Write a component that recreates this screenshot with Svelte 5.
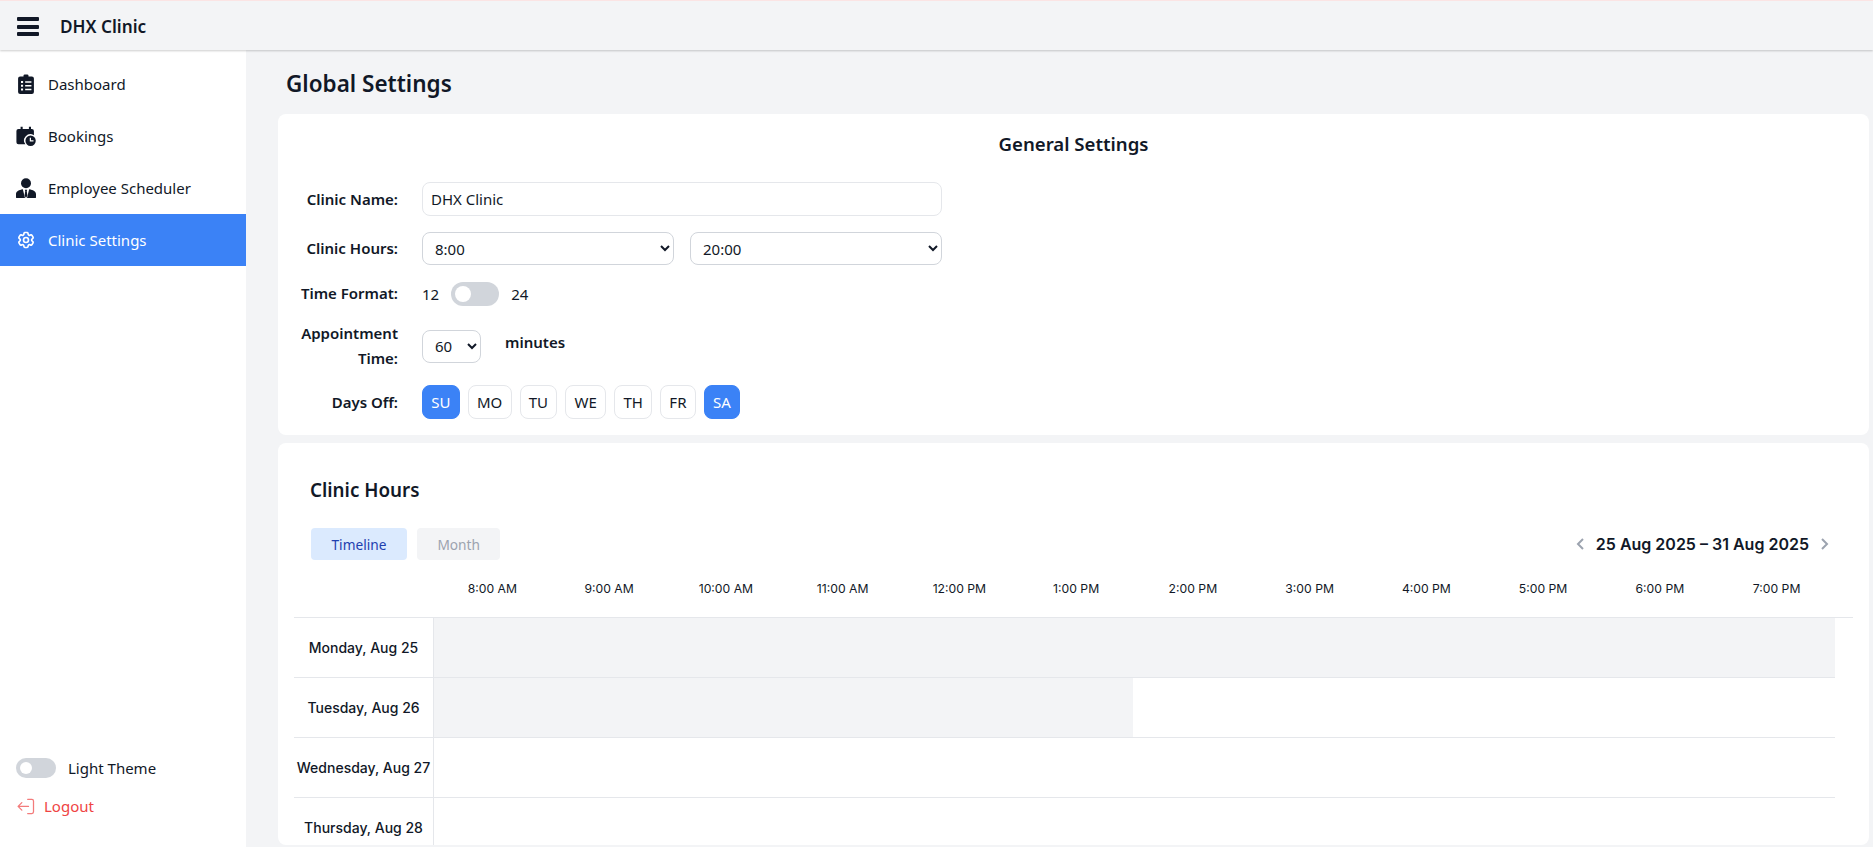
<script>
  const nav = [
    { label: 'Dashboard', icon: 'clipboard' },
    { label: 'Bookings', icon: 'calendar' },
    { label: 'Employee Scheduler', icon: 'person' },
    { label: 'Clinic Settings', icon: 'gear', active: true }
  ];
  const days = [
    { d: 'SU', off: true }, { d: 'MO' }, { d: 'TU' }, { d: 'WE' }, { d: 'TH' }, { d: 'FR' }, { d: 'SA', off: true }
  ];
  const hours = ['8:00 AM', '9:00 AM', '10:00 AM', '11:00 AM', '12:00 PM', '1:00 PM', '2:00 PM', '3:00 PM', '4:00 PM', '5:00 PM', '6:00 PM', '7:00 PM'];
  const rows = [
    { label: 'Monday, Aug 25', closed: 100 },
    { label: 'Tuesday, Aug 26', closed: 49.9 },
    { label: 'Wednesday, Aug 27', closed: 0 },
    { label: 'Thursday, Aug 28', closed: 0 }
  ];
</script>

<div class="app">
  <header class="topbar">
    <button class="burger" aria-label="Menu"><span></span><span></span><span></span></button>
    <span class="brand">DHX Clinic</span>
  </header>

  <div class="body">
    <aside class="sidebar">
      <nav>
        {#each nav as item}
          <a class="nav-item" class:active={item.active} href="#top">
            <svg viewBox="0 0 24 24" width="20" height="20" fill="currentColor">
              {#if item.icon === 'clipboard'}
                <path fill-rule="evenodd" d="M9 1.800a1.500 1.500 0 0 1 1.500-1.300h3A1.500 1.500 0 0 1 15 1.800V3h4a2.500 2.500 0 0 1 2.500 2.500v16A2.500 2.500 0 0 1 19 24H5a2.500 2.500 0 0 1-2.500-2.500v-16A2.500 2.500 0 0 1 5 3h4zM6 8.500v2.200h2.500V8.500zm5 .2v1.800h7.500V8.700zM6 13v2.200h2.500V13zm5 .2V15h7.500v-1.800zM6 17.500v2.200h2.500v-2.200zm5 .2v1.800h7.500v-1.800z"/>
              {:else if item.icon === 'calendar'}
                <path d="M5.500 0.800h2.500v2.700h7.500V.8H18v2.700h1A2.500 2.500 0 0 1 21.500 6v5.200A7.500 7.500 0 0 0 11.300 22H3A2.500 2.500 0 0 1 .5 19.500V6A2.500 2.500 0 0 1 3 3.500h2.500z"/>
                <path fill-rule="evenodd" d="M17.500 11.500a6.200 6.200 0 1 1 0 12.400 6.200 6.200 0 0 1 0-12.400zm-1 2.500v4.500H21V17h-3v-3z"/>
              {:else if item.icon === 'person'}
                <circle cx="12" cy="6.300" r="6"/>
                <path d="M8.200 13.500 10.800 24H1a1 1 0 0 1-1-1v-3.800c0-2.900 3.500-5 8.200-5.700zM15.800 13.500c4.700.7 8.200 2.800 8.200 5.700V23a1 1 0 0 1-1 1h-9.800z"/>
                <path d="M10.600 14h2.800l-.5 1.800.8 5.200-1.700 3-1.700-3 .8-5.200z"/>
              {:else}
                <g fill="none" stroke="currentColor" stroke-width="2" stroke-linecap="round" stroke-linejoin="round">
                  <path d="M9.594 3.940c.09-.542.56-.94 1.110-.94h2.593c.55 0 1.020.398 1.110.94l.213 1.281c.063.374.313.686.645.870.074.04.147.083.22.127.325.196.72.257 1.075.124l1.217-.456a1.125 1.125 0 0 1 1.370.490l1.296 2.247a1.125 1.125 0 0 1-.26 1.431l-1.003.827c-.293.241-.438.613-.43.992a7.723 7.723 0 0 1 0 .255c-.008.378.137.75.43.991l1.004.827c.424.35.534.955.26 1.430l-1.298 2.247a1.125 1.125 0 0 1-1.369.491l-1.217-.456c-.355-.133-.75-.072-1.076.124a6.470 6.470 0 0 1-.22.128c-.331.183-.581.495-.644.869l-.213 1.281c-.09.543-.56.94-1.110.94h-2.594c-.55 0-1.019-.398-1.110-.94l-.213-1.281c-.062-.374-.312-.686-.644-.87a6.520 6.520 0 0 1-.22-.127c-.325-.196-.72-.257-1.076-.124l-1.217.456a1.125 1.125 0 0 1-1.369-.49l-1.297-2.247a1.125 1.125 0 0 1 .26-1.431l1.004-.827c.292-.24.437-.613.43-.991a6.932 6.932 0 0 1 0-.255c.007-.38-.138-.751-.43-.992l-1.004-.827a1.125 1.125 0 0 1-.26-1.430l1.297-2.247a1.125 1.125 0 0 1 1.370-.491l1.216.456c.356.133.751.072 1.076-.124.072-.044.146-.086.22-.128.332-.183.582-.495.644-.869l.214-1.280z"/>
                  <circle cx="12" cy="12" r="3"/>
                </g>
              {/if}
            </svg>
            <span>{item.label}</span>
          </a>
        {/each}
      </nav>

      <div class="side-foot">
        <div class="theme">
          <span class="switch small"><i></i></span>
          <span>Light Theme</span>
        </div>
        <a class="logout" href="#top">
          <svg viewBox="0 0 24 24" width="20" height="20" fill="none" stroke="currentColor" stroke-width="1.500" stroke-linecap="round" stroke-linejoin="round">
            <path d="M14 4h5a2 2 0 0 1 2 2v13a2 2 0 0 1-2 2h-5M15 12.500H3M7 8l-4.500 4.500L7 17"/>
          </svg>
          <span>Logout</span>
        </a>
      </div>
    </aside>

    <main class="content">
      <h1>Global Settings</h1>

      <section class="card general">
        <h2>General Settings</h2>
        <div class="form">
          <div class="row name">
            <label for="clinic">Clinic Name:</label>
            <input id="clinic" value="DHX Clinic" />
          </div>
          <div class="row hours">
            <span class="lbl">Clinic Hours:</span>
            <div class="selects">
              <select><option>8:00</option></select>
              <select><option>20:00</option></select>
            </div>
          </div>
          <div class="row format">
            <span class="lbl">Time Format:</span>
            <div class="inline">
              <span>12</span>
              <span class="switch"><i></i></span>
              <span>24</span>
            </div>
          </div>
          <div class="row appt">
            <span class="lbl">Appointment Time:</span>
            <div class="inline wide">
              <select class="short"><option>60</option></select>
              <b>minutes</b>
            </div>
          </div>
          <div class="row off">
            <span class="lbl">Days Off:</span>
            <div class="days">
              {#each days as day}
                <button class:on={day.off}>{day.d}</button>
              {/each}
            </div>
          </div>
        </div>
      </section>

      <section class="card scheduler">
        <h3>Clinic Hours</h3>
        <div class="toolbar">
          <div class="tabs">
            <button class="tab current">Timeline</button>
            <button class="tab">Month</button>
          </div>
          <div class="range">
            <svg viewBox="0 0 12 16" width="12" height="16" fill="none" stroke="currentColor" stroke-width="2"><path d="M9 3 4 8l5 5"/></svg>
            <span>25 Aug 2025 – 31 Aug 2025</span>
            <svg viewBox="0 0 12 16" width="12" height="16" fill="none" stroke="currentColor" stroke-width="2"><path d="m3 3 5 5-5 5"/></svg>
          </div>
        </div>

        <div class="grid-head">
          <div class="corner"></div>
          {#each hours as h}
            <div class="hour">{h}</div>
          {/each}
          <div class="gutter"></div>
        </div>

        <div class="grid-body">
          {#each rows as r}
            <div class="day-row">
              <div class="day-label">{r.label}</div>
              <div class="track">
                <div class="closed" style="width: {r.closed}%"></div>
              </div>
            </div>
          {/each}
        </div>
      </section>
    </main>
  </div>
</div>

<style>
  :global(body) {
    background: #f3f4f6;
    color: #111827;
    font-family: "Noto Sans", "Open Sans", sans-serif;
    overflow: hidden;
  }

  .app {
    height: 847px;
    display: flex;
    flex-direction: column;
    overflow: hidden;
    border-top: 1px solid #fbe4e4;
  }

  .topbar {
    height: 49px;
    flex: none;
    box-sizing: border-box;
    padding-top: 2px;
    display: flex;
    align-items: center;
    background: #f3f4f6;
    box-shadow: 0 1px 2px rgba(0, 0, 0, 0.2);
    position: relative;
    z-index: 1;
  }

  .burger {
    margin-left: 17px;
    width: 22px;
    height: 19px;
    padding: 0;
    border: 0;
    background: none;
    display: flex;
    flex-direction: column;
    justify-content: space-between;
  }

  .burger span {
    display: block;
    height: 4px;
    border-radius: 1px;
    background: #111827;
  }

  .brand {
    margin-left: 21px;
    font-size: 17.2px;
    font-weight: 600;
  }

  .body {
    flex: 1;
    display: flex;
    min-height: 0;
  }

  .sidebar {
    width: 246px;
    flex: none;
    background: #fff;
    display: flex;
    flex-direction: column;
    justify-content: space-between;
  }

  nav {
    padding-top: 8px;
  }

  .nav-item {
    height: 52px;
    display: flex;
    align-items: center;
    gap: 12px;
    padding-left: 16px;
    color: #111827;
    text-decoration: none;
    font-size: 15px;
  }

  .nav-item.active {
    background: #3b82f6;
    color: #fff;
  }

  .side-foot {
    padding: 0 16px 32px;
  }

  .theme {
    display: flex;
    align-items: center;
    gap: 12px;
    font-size: 15px;
    height: 24px;
  }

  .logout {
    margin-top: 16px;
    display: flex;
    align-items: center;
    gap: 8px;
    color: #ef4444;
    text-decoration: none;
    font-size: 15px;
  }

  .logout svg {
    opacity: 0.7;
  }

  .switch {
    width: 48px;
    height: 24px;
    border-radius: 12px;
    background: #d1d5db;
    display: flex;
    align-items: center;
    padding-left: 4px;
    box-sizing: border-box;
  }

  .switch i {
    width: 16px;
    height: 16px;
    border-radius: 50%;
    background: #fff;
  }

  .switch.small {
    width: 40px;
    height: 20px;
  }

  .switch.small i {
    width: 12px;
    height: 12px;
  }

  .content {
    flex: 1;
    min-width: 0;
    padding: 0 4px 0 32px;
  }

  h1 {
    margin: 0;
    height: 64px;
    box-sizing: border-box;
    padding: 2px 0 0 8px;
    display: flex;
    align-items: center;
    font-size: 22.5px;
    font-weight: 600;
  }

  .card {
    background: #fff;
    border-radius: 8px;
    box-sizing: border-box;
  }

  .general {
    height: 321px;
    padding: 18px 16px 0;
  }

  h2 {
    margin: 0;
    text-align: center;
    font-size: 18.6px;
    font-weight: 600;
    line-height: 24px;
  }

  .form {
    margin-top: 26px;
    display: flex;
    flex-direction: column;
    width: 648px;
  }

  .row {
    display: grid;
    grid-template-columns: 104px 1fr;
    column-gap: 24px;
    align-items: center;
  }

  .row label,
  .lbl {
    text-align: right;
    font-size: 15px;
    font-weight: 600;
    line-height: 25px;
  }

  .row input {
    box-sizing: border-box;
    width: 520px;
    height: 34px;
    padding: 0 8px;
    border: 1px solid #e5e7eb;
    border-radius: 8px;
    font: inherit;
    font-size: 15px;
    color: #111827;
  }

  .hours {
    margin-top: 16px;
  }

  .selects {
    display: flex;
    gap: 16px;
    width: 520px;
  }

  select {
    box-sizing: border-box;
    flex: 1;
    min-width: 0;
    height: 33px;
    padding: 0 4px 0 8px;
    border: 1px solid #d1d5db;
    border-radius: 8px;
    background: #fff;
    font: inherit;
    font-size: 15px;
    color: #111827;
  }

  select.short {
    flex: none;
    width: 59px;
  }

  .format {
    margin-top: 16px;
  }

  .inline {
    display: flex;
    align-items: center;
    gap: 12px;
    font-size: 15px;
  }

  .inline.wide {
    gap: 24px;
  }

  .inline b {
    font-weight: 600;
    margin-top: -8px;
  }

  .appt {
    margin-top: 15px;
  }

  .off {
    margin-top: 14px;
  }

  .days {
    display: flex;
    gap: 8px;
  }

  .days button {
    height: 34px;
    padding: 0 8.25px;
    border: 1px solid #e5e7eb;
    border-radius: 8px;
    background: #fff;
    color: #111827;
    font: inherit;
    font-size: 15px;
  }

  .days button.on {
    background: #3b82f6;
    border-color: #3b82f6;
    color: #fff;
  }

  .scheduler {
    margin-top: 8px;
    height: 402px;
    padding: 32px 16px 0;
    overflow: hidden;
  }

  h3 {
    margin: 0 0 0 16px;
    font-size: 18.8px;
    font-weight: 600;
    line-height: 30px;
  }

  .toolbar {
    margin-top: 23px;
    display: flex;
    align-items: center;
    justify-content: space-between;
    padding: 0 22px 0 17px;
    font-family: Inter, sans-serif;
  }

  .tabs {
    display: flex;
    gap: 10px;
  }

  .tab {
    height: 32px;
    padding: 0 20.5px;
    border: 0;
    border-radius: 4px;
    background: #f3f4f6;
    color: #9ca3af;
    font-family: "Noto Sans", sans-serif;
    font-size: 13.7px;
  }

  .tab.current {
    background: #dbeafe;
    color: #1e40af;
  }

  .range {
    display: flex;
    align-items: center;
    gap: 10px;
    font-size: 16px;
    font-weight: 600;
  }

  .range svg {
    color: #9ca3af;
  }

  .grid-head {
    margin-top: 8px;
    height: 49px;
    display: flex;
    border-bottom: 1px solid #e5e7eb;
    font-family: Inter, sans-serif;
    font-size: 12.2px;
  }

  .corner {
    width: 140px;
    flex: none;
  }

  .hour {
    flex: 1;
    text-align: center;
    line-height: 42px;
  }

  .gutter {
    width: 18px;
    flex: none;
  }

  .grid-body {
    margin-right: 18px;
    font-family: Inter, sans-serif;
  }

  .day-row {
    height: 60px;
    display: flex;
    box-sizing: border-box;
    border-bottom: 1px solid #e5e7eb;
  }

  .day-label {
    width: 140px;
    flex: none;
    box-sizing: border-box;
    display: flex;
    align-items: center;
    justify-content: center;
    border-right: 1px solid #e5e7eb;
    font-size: 14px;
    font-weight: 500;
    white-space: nowrap;
  }

  .track {
    flex: 1;
  }

  .closed {
    height: 100%;
    background: #f3f4f6;
  }
</style>
